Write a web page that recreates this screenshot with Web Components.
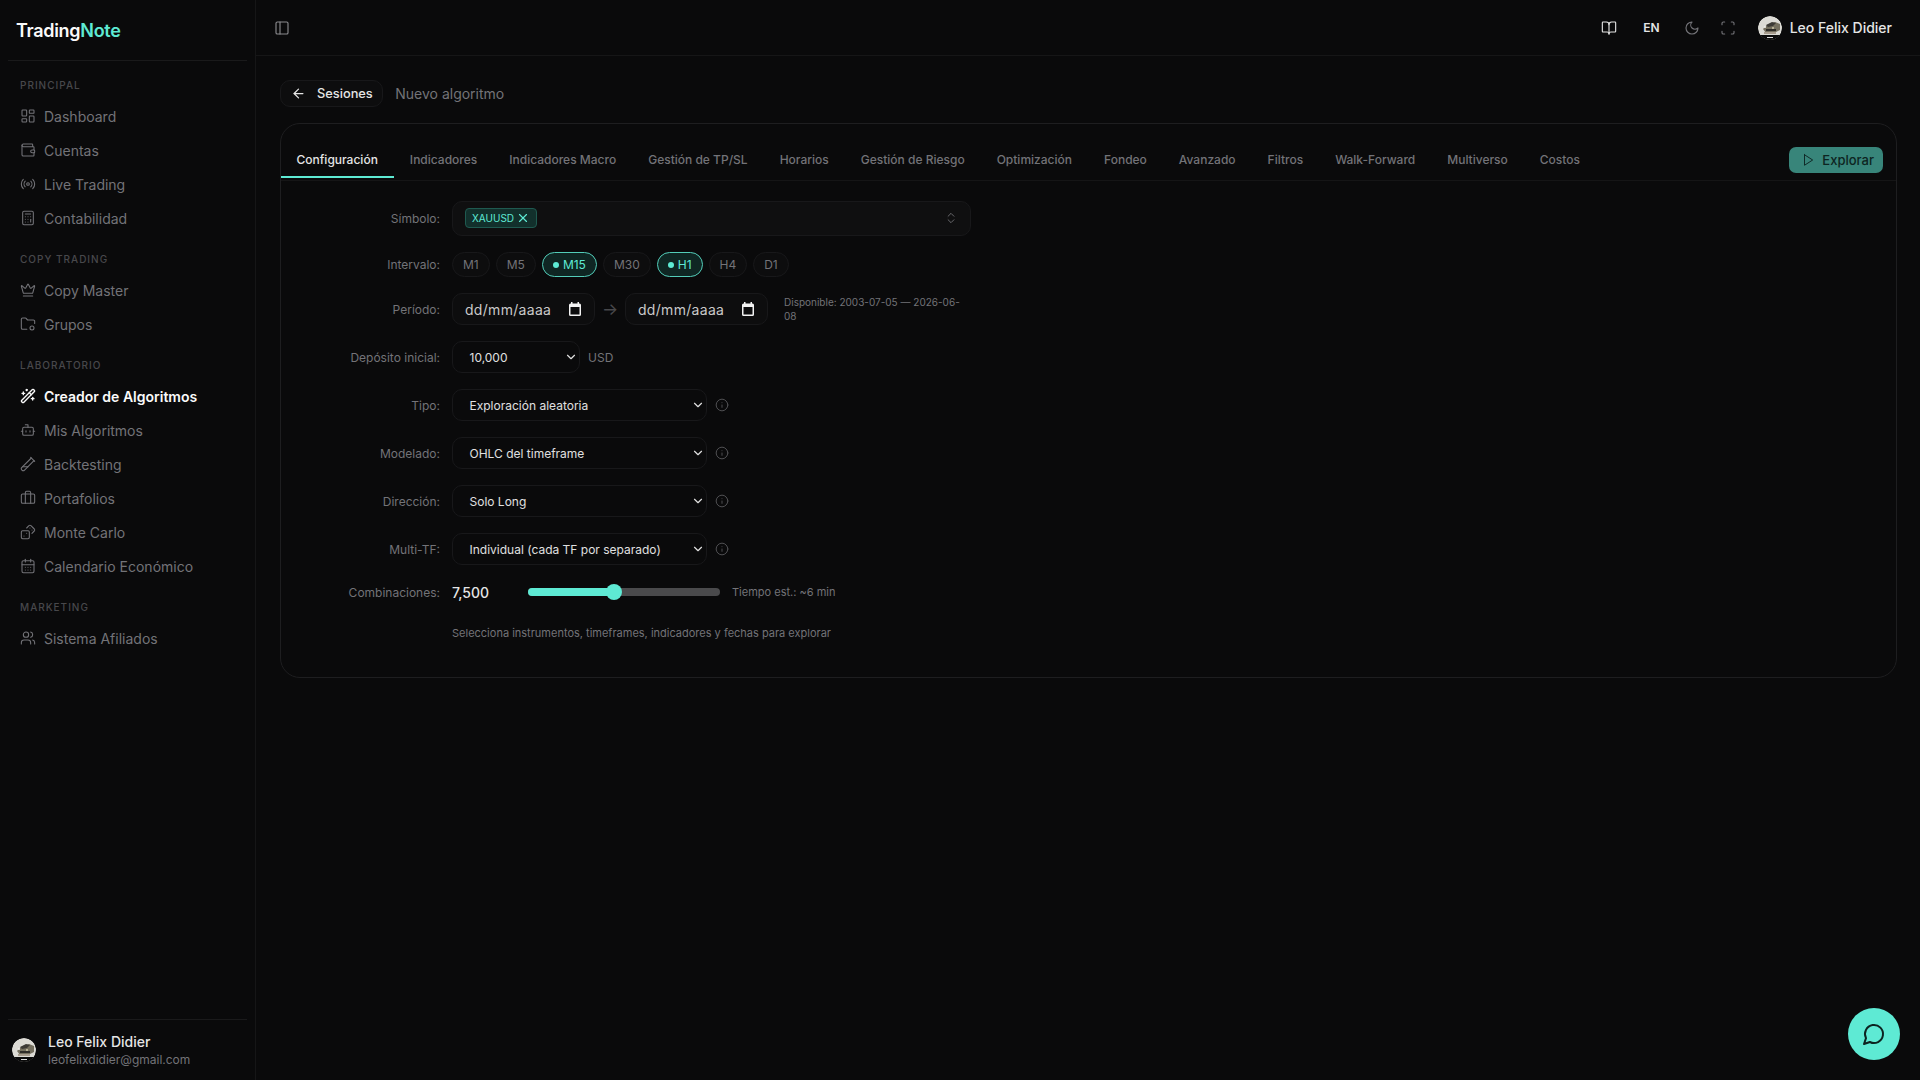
<!DOCTYPE html>
<html lang="es">
<head>
<meta charset="utf-8">
<title>TradingNote</title>
<style>
html,body{margin:0;height:100%;background:#0a0a0b;color:#e5e5e5;font-family:Inter,"Noto Sans",sans-serif;overflow:hidden}
</style>
</head>
<body>
<app-shell>
  <side-bar slot="side">
    <nav-section label="PRINCIPAL">
      <nav-item icon="dashboard">Dashboard</nav-item>
      <nav-item icon="wallet">Cuentas</nav-item>
      <nav-item icon="radio">Live Trading</nav-item>
      <nav-item icon="calculator">Contabilidad</nav-item>
    </nav-section>
    <nav-section label="COPY TRADING">
      <nav-item icon="crown">Copy Master</nav-item>
      <nav-item icon="folder">Grupos</nav-item>
    </nav-section>
    <nav-section label="LABORATORIO">
      <nav-item icon="wand" active>Creador de Algoritmos</nav-item>
      <nav-item icon="bot">Mis Algoritmos</nav-item>
      <nav-item icon="tube">Backtesting</nav-item>
      <nav-item icon="briefcase">Portafolios</nav-item>
      <nav-item icon="dices">Monte Carlo</nav-item>
      <nav-item icon="calendar">Calendario Económico</nav-item>
    </nav-section>
    <nav-section label="MARKETING">
      <nav-item icon="users">Sistema Afiliados</nav-item>
    </nav-section>
  </side-bar>
  <top-bar slot="top"></top-bar>
  <bread-crumb><span slot="back">Sesiones</span>Nuevo algoritmo</bread-crumb>
  <config-card>
    <tab-bar slot="tabs">
      <tab-item active>Configuración</tab-item>
      <tab-item>Indicadores</tab-item>
      <tab-item>Indicadores Macro</tab-item>
      <tab-item>Gestión de TP/SL</tab-item>
      <tab-item>Horarios</tab-item>
      <tab-item>Gestión de Riesgo</tab-item>
      <tab-item>Optimización</tab-item>
      <tab-item>Fondeo</tab-item>
      <tab-item>Avanzado</tab-item>
      <tab-item>Filtros</tab-item>
      <tab-item>Walk-Forward</tab-item>
      <tab-item>Multiverso</tab-item>
      <tab-item>Costos</tab-item>
    </tab-bar>
    <form-row label="Símbolo:"><symbol-box>XAUUSD</symbol-box></form-row>
    <form-row label="Intervalo:" gap="6">
      <tf-pill>M1</tf-pill><tf-pill>M5</tf-pill><tf-pill on>M15</tf-pill><tf-pill>M30</tf-pill><tf-pill on>H1</tf-pill><tf-pill>H4</tf-pill><tf-pill>D1</tf-pill>
    </form-row>
    <form-row label="Período:" gap="0">
      <date-box></date-box><range-arrow>→</range-arrow><date-box></date-box><avail-note>Disponible: 2003-07-05 — 2026-06-08</avail-note>
    </form-row>
    <form-row label="Depósito inicial:" gap="8">
      <select-box w="128">10,000</select-box><muted-text>USD</muted-text>
    </form-row>
    <form-row label="Tipo:" gap="8"><select-box w="255">Exploración aleatoria</select-box><info-dot></info-dot></form-row>
    <form-row label="Modelado:" gap="8"><select-box w="255">OHLC del timeframe</select-box><info-dot></info-dot></form-row>
    <form-row label="Dirección:" gap="8"><select-box w="255">Solo Long</select-box><info-dot></info-dot></form-row>
    <form-row label="Multi-TF:" gap="8"><select-box w="255">Individual (cada TF por separado)</select-box><info-dot></info-dot></form-row>
    <form-row label="Combinaciones:"><combo-slider></combo-slider></form-row>
    <form-row class="help"><muted-text small>Selecciona instrumentos, timeframes, indicadores y fechas para explorar</muted-text></form-row>
  </config-card>
  <chat-fab slot="fab"></chat-fab>
</app-shell>

<script>
const ICONS = {
  dashboard:'<rect x="3" y="3" width="7" height="9" rx="1"/><rect x="14" y="3" width="7" height="5" rx="1"/><rect x="14" y="12" width="7" height="9" rx="1"/><rect x="3" y="16" width="7" height="5" rx="1"/>',
  wallet:'<path d="M19 7V4a1 1 0 0 0-1-1H5a2 2 0 0 0 0 4h15a1 1 0 0 1 1 1v4h-3a2 2 0 0 0 0 4h3a1 1 0 0 0 1-1v-2a1 1 0 0 0-1-1"/><path d="M3 5v14a2 2 0 0 0 2 2h15a1 1 0 0 0 1-1v-4"/>',
  radio:'<path d="M4.9 19.1C1 15.2 1 8.8 4.9 4.9"/><path d="M7.8 16.2c-2.3-2.3-2.3-6.1 0-8.5"/><circle cx="12" cy="12" r="2"/><path d="M16.2 7.8c2.3 2.3 2.3 6.1 0 8.5"/><path d="M19.1 4.9C23 8.8 23 15.1 19.1 19"/>',
  calculator:'<rect x="4" y="2" width="16" height="20" rx="2"/><line x1="8" x2="16" y1="6" y2="6"/><line x1="16" x2="16" y1="14" y2="18"/><path d="M16 10h.01"/><path d="M12 10h.01"/><path d="M8 10h.01"/><path d="M12 14h.01"/><path d="M8 14h.01"/><path d="M12 18h.01"/><path d="M8 18h.01"/>',
  crown:'<path d="M11.562 3.266a.5.5 0 0 1 .876 0L15.39 8.87a1 1 0 0 0 1.516.294L21.183 5.5a.5.5 0 0 1 .798.519l-2.834 10.246a1 1 0 0 1-.956.734H5.81a1 1 0 0 1-.957-.734L2.02 6.02a.5.5 0 0 1 .798-.519l4.276 3.664a1 1 0 0 0 1.516-.294z"/><path d="M5 21h14"/>',
  folder:'<path d="M10.3 20H4a2 2 0 0 1-2-2V5a2 2 0 0 1 2-2h3.9a2 2 0 0 1 1.69.9l.81 1.2a2 2 0 0 0 1.67.9H20a2 2 0 0 1 2 2v3.3"/><circle cx="18" cy="18" r="3"/>',
  wand:'<path d="m21.64 3.64-1.28-1.28a1.21 1.21 0 0 0-1.72 0L2.36 18.64a1.21 1.21 0 0 0 0 1.72l1.28 1.28a1.2 1.2 0 0 0 1.72 0L21.64 5.36a1.2 1.2 0 0 0 0-1.72"/><path d="m14 7 3 3"/><path d="M5 6v4"/><path d="M19 14v4"/><path d="M10 2v2"/><path d="M7 8H3"/><path d="M21 16h-4"/><path d="M11 3H9"/>',
  bot:'<path d="M12 8V4H8"/><rect x="4" y="8" width="16" height="12" rx="2"/><path d="M2 14h2"/><path d="M20 14h2"/><path d="M15 13v2"/><path d="M9 13v2"/>',
  tube:'<path d="M21 7 6.82 21.18a2.83 2.83 0 0 1-3.99-.01a2.83 2.83 0 0 1 0-4L17 3"/><path d="m16 2 6 6"/><path d="M12 16H4"/>',
  briefcase:'<path d="M16 20V4a2 2 0 0 0-2-2h-4a2 2 0 0 0-2 2v16"/><rect x="2" y="6" width="20" height="14" rx="2"/>',
  dices:'<rect x="2" y="10" width="12" height="12" rx="2"/><path d="m17.92 14 3.5-3.5a2.24 2.24 0 0 0 0-3l-5-4.92a2.24 2.24 0 0 0-3 0L10 6"/><path d="M6 18h.01"/><path d="M10 14h.01"/><path d="M15 6h.01"/><path d="M18 9h.01"/>',
  calendar:'<path d="M8 2v4"/><path d="M16 2v4"/><rect x="3" y="4" width="18" height="18" rx="2"/><path d="M3 10h18"/><path d="M8 14h.01"/><path d="M12 14h.01"/><path d="M16 14h.01"/><path d="M8 18h.01"/><path d="M12 18h.01"/><path d="M16 18h.01"/>',
  users:'<path d="M16 21v-2a4 4 0 0 0-4-4H6a4 4 0 0 0-4 4v2"/><circle cx="9" cy="7" r="4"/><path d="M22 21v-2a4 4 0 0 0-3-3.87"/><path d="M16 3.13a4 4 0 0 1 0 7.75"/>',
  panel:'<rect x="3" y="3" width="18" height="18" rx="2"/><path d="M9 3v18"/>',
  book:'<path d="M12 7v14"/><path d="M3 18a1 1 0 0 1-1-1V4a1 1 0 0 1 1-1h5a4 4 0 0 1 4 4 4 4 0 0 1 4-4h5a1 1 0 0 1 1 1v13a1 1 0 0 1-1 1h-6a3 3 0 0 0-3 3 3 3 0 0 0-3-3z"/>',
  moon:'<path d="M12 3a6 6 0 0 0 9 9 9 9 0 1 1-9-9Z"/>',
  scan:'<path d="M3 7V5a2 2 0 0 1 2-2h2"/><path d="M17 3h2a2 2 0 0 1 2 2v2"/><path d="M21 17v2a2 2 0 0 1-2 2h-2"/><path d="M7 21H5a2 2 0 0 1-2-2v-2"/>',
  back:'<path d="m12 19-7-7 7-7"/><path d="M19 12H5"/>',
  play:'<polygon points="6 3 20 12 6 21 6 3"/>',
  updown:'<path d="m7 15 5 5 5-5"/><path d="m7 9 5-5 5 5"/>',
  x:'<path d="M18 6 6 18"/><path d="m6 6 12 12"/>',
  info:'<circle cx="12" cy="12" r="10"/><path d="M12 16v-4"/><path d="M12 8h.01"/>',
  chat:'<path d="M7.9 20A9 9 0 1 0 4 16.1L2 22Z"/>',
  down:'<path d="m6 9 6 6 6-6"/>'
};
function def(name, css, html, init){
  customElements.define(name, class extends HTMLElement{
    connectedCallback(){
      if(this.shadowRoot) return;
      const r=this.attachShadow({mode:'open'});
      r.innerHTML='<style>'+css+'</style>'+(typeof html==='function'?html(this):html);
      if(init) init(this,r);
    }
  });
}
def('x-icon',':host{display:inline-flex;flex:none}svg{display:block}',el=>{
  const s=el.getAttribute('size')||16, w=el.getAttribute('sw')||2;
  return `<svg width="${s}" height="${s}" viewBox="0 0 24 24" fill="none" stroke="currentColor" stroke-width="${w}" stroke-linecap="round" stroke-linejoin="round">${ICONS[el.getAttribute('name')]||''}</svg>`;
});
def('x-avatar',':host{display:inline-flex;flex:none}svg{display:block;border-radius:50%}',el=>{
  const s=el.getAttribute('size')||24;
  return `<svg width="${s}" height="${s}" viewBox="0 0 24 24"><circle cx="12" cy="12" r="12" fill="#dcdbd5"/><rect x="0" y="19" width="24" height="5" fill="#0b0b0b"/><rect x="9" y="21" width="6" height="1" fill="#ddd"/><path d="M5 13l4-4 8-3 5 2v6l-6 3H8z" fill="#75705f"/><path d="M8 9l6-3 4 1-3 3-5 1z" fill="#3d3b36"/><rect x="8" y="13" width="10" height="2" fill="#2e2c28"/><path d="M6 16h12v2H6z" fill="#a89d8e"/><circle cx="7" cy="11" r="1" fill="#f3f2ee"/><circle cx="15" cy="12" r="1" fill="#cfc8a8"/></svg>`;
});
def('app-shell',`
  :host{display:flex;width:100%;height:100vh;background:#0a0a0b;position:relative}
  .main{flex:1;min-width:0;display:flex;flex-direction:column}
  .content{flex:1;padding:24px 23px 0 24px;display:flex;flex-direction:column;gap:16px}
  .fab{position:absolute;right:20px;bottom:20px}`,
  `<slot name="side"></slot><div class="main"><slot name="top"></slot><div class="content"><slot></slot></div></div><div class="fab"><slot name="fab"></slot></div>`);
def('side-bar',`
  :host{display:flex;flex-direction:column;width:256px;flex:none;box-sizing:border-box;border-right:1px solid #161617;background:#0a0a0b;height:100vh}
  .logo{height:60px;margin:0 8px;padding-left:8px;border-bottom:1px solid #1a1a1b;display:flex;align-items:center;font-size:18px;font-weight:600;color:#fafafa;letter-spacing:-.3px;flex:none}
  .logo b{font-weight:600;color:#5eead4}
  .nav{flex:1;padding:0 8px}
  .foot{margin:0 8px;border-top:1px solid #1a1a1b;height:60px;display:flex;align-items:center;gap:12px;padding-left:4px;flex:none}
  .tx{padding-top:2px}
  .n{font-size:14px;font-weight:500;color:#e5e5e5;line-height:18px}
  .m{font-size:12px;color:#737378;line-height:18px}`,
  `<div class="logo">Trading<b>Note</b></div><div class="nav"><slot></slot></div>
   <div class="foot"><x-avatar size="24"></x-avatar><div class="tx"><div class="n">Leo Felix Didier</div><div class="m">leofelixdidier@gmail.com</div></div></div>`);
def('nav-section',`
  :host{display:block;padding-top:17px}
  .l{font-size:10px;line-height:14px;font-weight:500;letter-spacing:1px;color:#48484b;padding-left:12px;margin-bottom:7px}`,
  el=>`<div class="l">${el.getAttribute('label')}</div><slot></slot>`);
def('nav-item',`
  :host{display:flex;align-items:center;height:34px;gap:8px;padding-left:12px;font-size:14px;color:#737378}
  :host([active]){color:#fafafa;font-weight:600}`,
  el=>`<x-icon name="${el.getAttribute('icon')}" sw="${el.hasAttribute('active')?2:1.6}"></x-icon><slot></slot>`);
def('top-bar',`
  :host{display:flex;align-items:center;height:56px;box-sizing:border-box;border-bottom:1px solid #161617;padding:0 28px 0 18px;flex:none}
  .sp{flex:1}
  .p{color:#8a8a8e;display:flex}
  .w{color:#e5e5e5}
  .en{font-size:12px;font-weight:600;color:#e5e5e5}
  .d{color:#737378}
  .nm{font-size:14px;font-weight:500;color:#e5e5e5;margin-left:8px}`,
  `<x-icon class="p" name="panel" sw="1.7"></x-icon><div class="sp"></div>
   <x-icon class="w" name="book" sw="1.7"></x-icon>
   <span class="en" style="margin-left:26px">EN</span>
   <x-icon class="d" name="moon" sw="1.7" style="margin-left:24px"></x-icon>
   <x-icon class="d" name="scan" sw="1.7" style="margin-left:20px"></x-icon>
   <x-avatar size="24" style="margin-left:22px"></x-avatar><span class="nm">Leo Felix Didier</span>`);
def('bread-crumb',`
  :host{display:flex;align-items:center;gap:12px;font-size:14px;color:#737378;height:27px;flex:none}
  .b{display:flex;align-items:center;gap:11px;height:27px;box-sizing:border-box;padding:0 9.5px 0 10px;border:1px solid #18181a;border-radius:10px;background:#0d0d0e;color:#e5e5e5;font-size:12.8px;font-weight:500}`,
  `<div class="b"><x-icon name="back" size="15"></x-icon><slot name="back"></slot></div><slot></slot>`);
def('config-card',`
  :host{display:flex;flex-direction:column;box-sizing:border-box;height:555px;border:1px solid #1e1e20;border-radius:20px;background:#0a0a0b;margin-left:-.5px;flex:none}
  .f{padding:20px 19.5px 0;display:flex;flex-direction:column;gap:16px}`,
  `<slot name="tabs"></slot><div class="f"><slot></slot></div>`);
def('tab-bar',`
  :host{display:flex;align-items:center;padding:16px 13px 0 0;height:57px;box-sizing:border-box;border-bottom:1px solid #151516;flex:none}
  .t{display:flex;flex:1;align-self:flex-start}
  .e{align-self:flex-start;margin-top:7px;display:flex;align-items:center;gap:7px;height:26px;padding:0 9px 0 12px;background:#38857a;border-radius:7px;color:#0d2421;font-size:13px;font-weight:500}`,
  `<div class="t"><slot></slot></div><div class="e"><x-icon name="play" size="14" sw="1.6"></x-icon>Explorar</div>`);
def('tab-item',`
  :host{display:flex;align-items:center;height:38px;box-sizing:border-box;padding:0 16px;font-size:12px;font-weight:500;color:#737378;white-space:nowrap}
  :host([active]){color:#e5e5e5;border-bottom:2px solid #5eead4;padding-top:2px}`,`<slot></slot>`);
def('form-row',`
  :host{display:flex;align-items:center}
  :host(.help){margin-top:7px}
  .l{width:140px;margin-right:12px;text-align:right;font-size:12px;color:#737378;flex:none}
  .c{display:flex;align-items:center;flex:1;min-width:0}`,
  el=>`<div class="l">${el.getAttribute('label')||''}</div><div class="c" style="gap:${el.getAttribute('gap')||0}px"><slot></slot></div>`);
def('symbol-box',`
  :host{display:flex;align-items:center;width:519px;height:35px;box-sizing:border-box;border:1px solid #18181a;border-radius:10px;background:#0f0f10;padding:0 12px 2px;color:#737378}
  .t{display:flex;align-items:center;gap:2px;height:20px;box-sizing:border-box;padding:0 6px;border:1px solid #1f5a50;background:#12302c;border-radius:4px;color:#5eead4;font-size:10px;font-weight:400}
  .sp{flex:1}`,
  `<div class="t"><slot></slot><x-icon name="x" size="14" sw="2"></x-icon></div><div class="sp"></div><x-icon name="updown" size="14" sw="1.5"></x-icon>`);
def('tf-pill',`
  :host{display:inline-flex;align-items:center;gap:4px;height:25px;box-sizing:border-box;padding:0 10px;border:1px solid #18181a;border-radius:13px;background:#0d0d0e;font-size:12px;font-weight:400;color:#737378}
  :host([on]){color:#5eead4;background:#0f2623;border-color:#53cdb9}
  .dot{width:6px;height:6px;border-radius:50%;background:#5eead4;display:none}
  :host([on]) .dot{display:block}`,
  `<span class="dot"></span><slot></slot>`);
def('date-box',`
  :host{display:flex;align-items:center;justify-content:space-between;width:143px;height:32px;box-sizing:border-box;border:1px solid #18181a;border-radius:10px;background:#0d0d0e;padding:0 12px;font-size:14px;letter-spacing:.3px;color:#c9c9c9}
  svg{display:block}`,
  `<span>dd/mm/aaaa</span><svg width="14" height="14" viewBox="0 0 14 14" fill="#f2f2f2"><path d="M3 0h1.5v1.5h5V0H11v1.5h.5A1.5 1.5 0 0 1 13 3v9.500A1.500 1.500 0 0 1 11.500 14h-9A1.500 1.500 0 0 1 1 12.500V3a1.500 1.500 0 0 1 1.500-1.500H3zM2.500 5v7.500h9V5z"/></svg>`);
def('range-arrow',`:host{width:30px;text-align:center;font-size:17px;color:#48484b;flex:none}`,`<slot></slot>`);
def('avail-note',`:host{display:block;width:188px;margin-left:16px;font-size:10px;line-height:14px;color:#737378}`,`<slot></slot>`);
def('select-box',`
  :host{display:flex;align-items:center;justify-content:space-between;height:32px;box-sizing:border-box;border:1px solid #18181a;border-radius:10px;background:#0a0a0b;padding:0 1px 0 16.5px;font-size:12px;color:#e0e0e0;flex:none}`,
  el=>{el.style.width=el.getAttribute('w')+'px';return `<span><slot></slot></span><x-icon name="down" size="14" sw="2"></x-icon>`;});
def('muted-text',`:host{font-size:12px;color:#737378}:host([small]){font-size:11px}`,`<slot></slot>`);
def('info-dot',`:host{display:flex;color:#505053;margin-left:0}`,`<x-icon name="info" size="14" sw="1.7"></x-icon>`);
def('combo-slider',`
  :host{display:flex;align-items:center;height:22px}
  .v{width:76px;font-size:14px;font-weight:500;color:#e5e5e5}
  .tr{position:relative;width:192px;height:8px;border-radius:4px;background:#4a4a4c}
  .fi{position:absolute;left:0;top:0;bottom:0;width:86px;border-radius:4px;background:#5eead4}
  .th{position:absolute;left:78px;top:-4px;width:16px;height:16px;border-radius:50%;background:#5eead4}
  .e{margin-left:12px;font-size:11px;color:#737378}`,
  `<span class="v">7,500</span><div class="tr"><div class="fi"></div><div class="th"></div></div><span class="e">Tiempo est.: ~6 min</span>`);
def('chat-fab',`
  :host{display:flex;align-items:center;justify-content:center;width:52px;height:52px;border-radius:50%;background:#5eead4;color:#0d2421}`,
  `<x-icon name="chat" size="24" sw="2"></x-icon>`);
</script>
</body>
</html>
